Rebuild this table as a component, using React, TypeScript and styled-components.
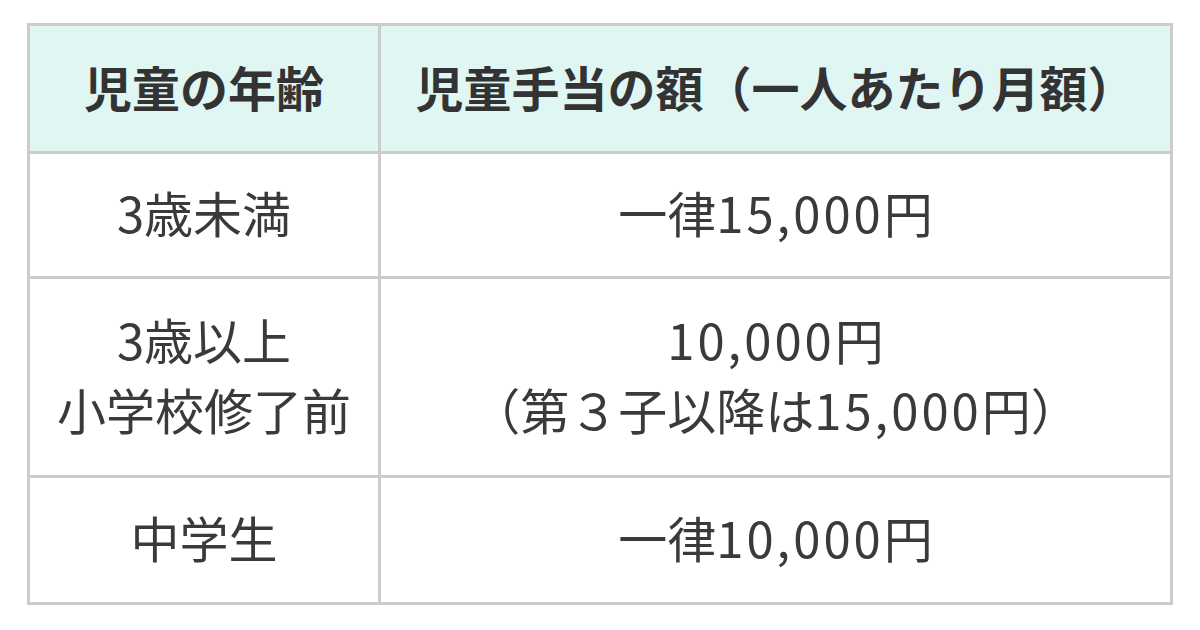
import React from "react";
import styled, { createGlobalStyle } from "styled-components";

const GlobalStyle = createGlobalStyle`
  html, body {
    margin: 0;
    padding: 0;
    background: #ffffff;
  }
  body {
    font-family: "Noto Sans CJK JP", "Noto Sans", sans-serif;
    color: #333333;
  }
`;

const Page = styled.div`
  padding: 23px 0 0 27px;
`;

const Table = styled.table`
  width: 1146px;
  border-collapse: collapse;
  border: 3px solid #cccccc;
  table-layout: fixed;
`;

const HeadCell = styled.th<{ $width?: number }>`
  width: ${(p) => (p.$width ? `${p.$width}px` : "auto")};
  height: 119px;
  padding: 0 0 6px;
  background: #dff6f3;
  border: 3px solid #cccccc;
  font-size: 48px;
  font-weight: 700;
  color: #333333;
  text-align: center;
  vertical-align: middle;
`;

const Cell = styled.td<{ $height: number }>`
  height: ${(p) => p.$height}px;
  padding: 0 0 6px;
  border: 3px solid #cccccc;
  font-size: 49px;
  font-weight: 400;
  line-height: 70px;
  color: #3a3a3a;
  text-align: center;
  vertical-align: middle;
`;

const Num = styled.span`
  letter-spacing: 3px;
`;

type Part = string | { num: string };

const rows: { age: Part[][]; amount: Part[][]; height: number }[] = [
  { age: [["3歳未満"]], amount: [["一律", { num: "15,000" }, "円"]], height: 116 },
  {
    age: [["3歳以上"], ["小学校修了前"]],
    amount: [
      [{ num: "10,000" }, "円"],
      ["（第３子以降は", { num: "15,000" }, "円）"],
    ],
    height: 190,
  },
  { age: [["中学生"]], amount: [["一律", { num: "10,000" }, "円"]], height: 118 },
];

const Lines: React.FC<{ lines: Part[][] }> = ({ lines }) => (
  <>
    {lines.map((line, i) => (
      <React.Fragment key={i}>
        {i > 0 && <br />}
        {line.map((p, j) =>
          typeof p === "string" ? (
            <React.Fragment key={j}>{p}</React.Fragment>
          ) : (
            <Num key={j}>{p.num}</Num>
          )
        )}
      </React.Fragment>
    ))}
  </>
);

export default function App() {
  return (
    <>
      <GlobalStyle />
      <Page>
        <Table>
          <thead>
            <tr>
              <HeadCell $width={348}>児童の年齢</HeadCell>
              <HeadCell>児童手当の額（一人あたり月額）</HeadCell>
            </tr>
          </thead>
          <tbody>
            {rows.map((r, i) => (
              <tr key={i}>
                <Cell $height={r.height}>
                  <Lines lines={r.age} />
                </Cell>
                <Cell $height={r.height}>
                  <Lines lines={r.amount} />
                </Cell>
              </tr>
            ))}
          </tbody>
        </Table>
      </Page>
    </>
  );
}
